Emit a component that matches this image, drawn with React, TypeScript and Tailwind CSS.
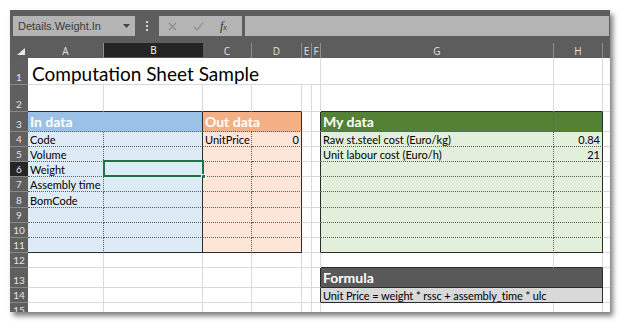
import type { ReactNode } from "react"

// border presets (kept as full class names so tailwind picks them up)
const GR = "border-r-[#dadada]"
const GB = "border-b-[#dadada]"
const DR = "border-r-[#5e5e5e] [border-right-style:dotted]!"
const DB = "border-b-[#5e5e5e] [border-bottom-style:dotted]!"
const KR = "border-r-[#2b2b2b]"
const KB = "border-b-[#2b2b2b]"

const W = {
  A: "w-[76px]",
  B: "w-[99px]",
  C: "w-[49px]",
  D: "w-[50px]",
  E: "w-[10px]",
  F: "w-[9px]",
  G: "w-[233px]",
  H: "w-[49px]",
}

function Cell({ w, className = "", children }: { w: string; className?: string; children?: ReactNode }) {
  return (
    <div className={`${w} h-full shrink-0 border-r border-b flex items-end px-[2px] pb-[1px] overflow-hidden whitespace-nowrap leading-none text-[11px] text-black ${className}`}>
      {children}
    </div>
  )
}

function Rest({ className = "" }: { className?: string }) {
  return <div className={`flex-1 h-full border-b ${GB} ${className}`} />
}

function Row({ n, h, active, children }: { n: number; h: string; active?: boolean; children: ReactNode }) {
  return (
    <div className={`flex ${h}`}>
      <div className={`w-[18px] shrink-0 h-full border-b border-b-[#8a8a8a] flex items-end justify-center pb-[2px] leading-none text-[10px] text-[#e4e4e4] ${active ? "bg-[#262626]" : "bg-[#5f5f5f]"}`}>
        {n}
      </div>
      {children}
    </div>
  )
}

const head = "font-bold text-white text-[14px] pb-[2px]"

function TableRow({ n, last, active }: { n: number; last?: boolean; active?: boolean }) {
  const labels: Record<number, string> = { 4: "Code", 5: "Volume", 6: "Weight", 7: "Assembly time", 8: "BomCode" }
  return (
    <Row n={n} h={n === 8 ? "h-[16px]" : "h-[15px]"} active={active}>
      <Cell w={W.A} className={`bg-[#ddebf7] ${DR} ${last ? KB : DB}`}>{labels[n]}</Cell>
      <Cell w={W.B} className={`bg-[#ddebf7] relative overflow-visible ${KR} ${last ? KB : DB}`}>
        {active && (
          <div className="absolute left-[-1px] top-[-2px] w-[101px] h-[17px] border-2 border-[#217346]">
            <div className="absolute right-[-4px] bottom-[-4px] w-[5px] h-[5px] bg-[#217346] border border-white" />
          </div>
        )}
      </Cell>
      <Cell w={W.C} className={`bg-[#fce4d6] ${DR} ${last ? KB : DB}`}>{n === 4 ? "UnitPrice" : ""}</Cell>
      <Cell w={W.D} className={`bg-[#fce4d6] justify-end ${KR} ${last ? KB : DB}`}>{n === 4 ? "0" : ""}</Cell>
      <Cell w={W.E} className={`${GR} ${GB}`} />
      <Cell w={W.F} className={`${KR} ${GB}`} />
      <Cell w={W.G} className={`bg-[#e2efda] ${DR} ${last ? KB : DB}`}>
        {n === 4 ? "Raw st.steel cost (Euro/kg)" : n === 5 ? "Unit labour cost (Euro/h)" : ""}
      </Cell>
      <Cell w={W.H} className={`bg-[#e2efda] justify-end ${KR} ${last ? KB : DB}`}>
        {n === 4 ? "0.84" : n === 5 ? "21" : ""}
      </Cell>
      <Rest />
    </Row>
  )
}

function PlainRow({ n, h, formula }: { n: number; h: string; formula?: "head" | "body" }) {
  return (
    <Row n={n} h={h}>
      <Cell w={W.A} className={`${GR} ${GB}`} />
      <Cell w={W.B} className={`${GR} ${GB}`} />
      <Cell w={W.C} className={`${GR} ${GB}`} />
      <Cell w={W.D} className={`${GR} ${GB}`} />
      <Cell w={W.E} className={`${GR} ${GB}`} />
      <Cell w={W.F} className={`${formula ? KR : GR} ${GB}`} />
      {formula === "head" && (
        <Cell w="w-[282px]" className={`bg-[#595959] ${head} ${KR} ${KB}`}>Formula</Cell>
      )}
      {formula === "body" && (
        <Cell w="w-[282px]" className={`bg-[#d9d9d9] tracking-[-0.1px] ${KR} ${KB}`}>Unit Price = weight * rssc + assembly_time * ulc</Cell>
      )}
      {!formula && (
        <>
          <Cell w={W.G} className={`${GR} ${n === 12 ? KB : GB}`} />
          <Cell w={W.H} className={`${GR} ${n === 12 ? KB : GB}`} />
        </>
      )}
      <Rest />
    </Row>
  )
}

function ColHead({ w, label, active }: { w: string; label: string; active?: boolean }) {
  return (
    <div className={`${w} shrink-0 h-full flex items-center justify-center text-[10px] leading-none ${active ? "bg-[#242424] border-b border-b-[#217346] text-white" : "border-r border-r-[#8d8d8d] text-[#e0e0e0]"}`}>
      {label}
    </div>
  )
}

export default function App() {
  return (
    <div className="w-[621px] h-[323px] bg-white pl-[10px] pt-[10px] font-['Lato',sans-serif]">
      <div className="w-[600px] h-[302px] bg-[#5d5d5d] overflow-hidden flex flex-col shadow-[3px_4px_5px_rgba(0,0,0,0.5)]">
        {/* formula bar */}
        <div className="h-[33px] shrink-0 flex items-start pt-[6px] pl-[3px] pr-[1px]">
          <div className="w-[122px] h-[20px] bg-[#b4b4b4] flex items-center justify-between pl-[5px] pr-[5px] font-['Liberation_Sans',sans-serif] text-[11px] text-[#3a3a3a]">
            <span>Details.Weight.In</span>
            <svg width="7" height="4" viewBox="0 0 7 4"><path d="M0 0h7L3.5 4z" fill="#454545" /></svg>
          </div>
          <div className="w-[24px] h-[20px] flex flex-col items-center justify-center gap-[2px]">
            <div className="w-[2px] h-[2px] bg-[#d6d6d6]" />
            <div className="w-[2px] h-[2px] bg-[#d6d6d6]" />
            <div className="w-[2px] h-[2px] bg-[#d6d6d6]" />
          </div>
          <div className="w-[83px] h-[20px] bg-[#b4b4b4] flex items-center pl-[9px] gap-[16px]">
            <svg width="9" height="9" viewBox="0 0 9 9"><path d="M1 1l7 7M8 1l-7 7" stroke="#8a8a8a" strokeWidth="1.1" /></svg>
            <svg width="11" height="9" viewBox="0 0 11 9"><path d="M1 5l3 3 6-7" stroke="#8a8a8a" strokeWidth="1.1" fill="none" /></svg>
            <span className="font-['Liberation_Serif',serif] italic text-[12px] text-[#2e2e2e] leading-none">
              f<span className="text-[8px]">x</span>
            </span>
          </div>
          <div className="flex-1 ml-[3px] h-[20px] bg-[#b4b4b4]" />
        </div>

        {/* column headers */}
        <div className="h-[15px] shrink-0 flex font-['Open_Sans',sans-serif]">
          <div className="w-[18px] shrink-0 h-full flex items-end justify-end pr-[3px] pb-[3px]">
            <svg width="8" height="7" viewBox="0 0 8 7"><path d="M8 0v7H0z" fill="#e8e8e8" /></svg>
          </div>
          <ColHead w={W.A} label="A" />
          <ColHead w={W.B} label="B" active />
          <ColHead w={W.C} label="C" />
          <ColHead w={W.D} label="D" />
          <ColHead w={W.E} label="E" />
          <ColHead w={W.F} label="F" />
          <ColHead w={W.G} label="G" />
          <ColHead w={W.H} label="H" />
          <div className="flex-1" />
        </div>

        {/* sheet */}
        <div className="flex-1 flex flex-col bg-white">
          <Row n={1} h="h-[27px]">
            <Cell w="w-[293px]" className={`text-[19px] pl-[4px] ${GR} ${GB}`}>Computation Sheet Sample</Cell>
            <Cell w={W.G} className={`${GR} ${GB}`} />
            <Cell w={W.H} className={`${GR} ${GB}`} />
            <Rest />
          </Row>
          <Row n={2} h="h-[27px]">
            <Cell w={W.A} className={`${GR} ${KB}`} />
            <Cell w={W.B} className={`${GR} ${KB}`} />
            <Cell w={W.C} className={`${GR} ${KB}`} />
            <Cell w={W.D} className={`${GR} ${KB}`} />
            <Cell w={W.E} className={`${GR} ${GB}`} />
            <Cell w={W.F} className={`${GR} ${GB}`} />
            <Cell w={W.G} className={`${GR} ${KB}`} />
            <Cell w={W.H} className={`${GR} ${KB}`} />
            <Rest />
          </Row>
          <Row n={3} h="h-[20px]">
            <Cell w="w-[175px]" className={`bg-[#9bc2e6] ${head} ${KR} ${DB}`}>In data</Cell>
            <Cell w="w-[99px]" className={`bg-[#f4b084] ${head} ${KR} ${DB}`}>Out data</Cell>
            <Cell w={W.E} className={`${GR} ${GB}`} />
            <Cell w={W.F} className={`${KR} ${GB}`} />
            <Cell w={W.G} className={`bg-[#548235] ${head} ${DR} ${DB}`}>My data</Cell>
            <Cell w={W.H} className={`bg-[#548235] ${KR} ${DB}`} />
            <Rest />
          </Row>
          {[4, 5, 6, 7, 8, 9, 10, 11].map((n) => (
            <TableRow key={n} n={n} last={n === 11} active={n === 6} />
          ))}
          <PlainRow n={12} h="h-[15px]" />
          <PlainRow n={13} h="h-[20px]" formula="head" />
          <PlainRow n={14} h="h-[15px]" formula="body" />
          <PlainRow n={15} h="h-[15px]" />
        </div>
      </div>
    </div>
  )
}
